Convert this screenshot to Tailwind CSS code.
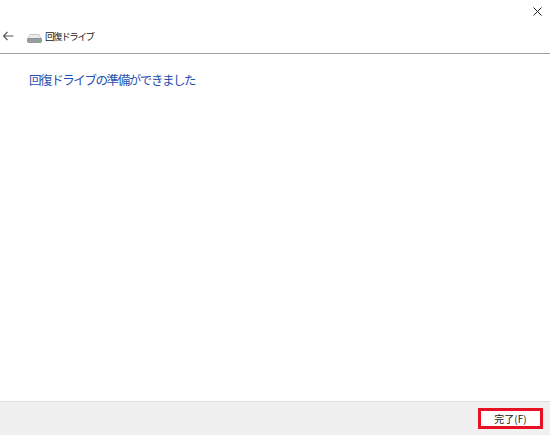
<!DOCTYPE html>
<html lang="ja">
<head>
    <meta charset="UTF-8">
    <title>回復ドライブ</title>
    <script src="https://cdn.jsdelivr.net/npm/@tailwindcss/browser@4"></script>
</head>
<body class="w-[550px] h-[435px] overflow-hidden bg-white font-['Noto_Sans_CJK_JP',sans-serif]">
    <div class="flex flex-col h-full">
        <!-- close button row -->
        <div class="flex justify-end h-[20px] pt-[7px] pr-[8px]">
            <svg width="9" height="9" viewBox="0 0 9 9" class="block">
                <path d="M0.5 0.5L8.5 8.5M8.5 0.5L0.5 8.5" stroke="#222" stroke-width="1" fill="none"/>
            </svg>
        </div>

        <!-- header -->
        <div class="flex items-center h-[34px] border-b border-[#a0a0a0] pb-[1px]">
            <svg width="12" height="10" viewBox="0 0 12 10" class="ml-[2px]">
                <path d="M11.5 5H1.5M5.5 1L1.5 5L5.5 9" stroke="#555" stroke-width="1.1" fill="none"/>
            </svg>
            <svg width="15" height="9" viewBox="0 0 15 9" class="ml-[13px] mt-[4px]">
                <path d="M3 0.5H12L14.5 5H0.5Z" fill="#ececec" stroke="#b5b5b5" stroke-width="0.7"/>
                <rect x="0.5" y="4.5" width="14" height="4" rx="1" fill="#9a9ea3" stroke="#70757a" stroke-width="0.6"/>
                <rect x="11" y="6" width="2" height="1.5" fill="#5fc05f"/>
            </svg>
            <span class="ml-[3px] text-[9.5px] tracking-[-1.4px] text-[#222]">回復ドライブ</span>
        </div>

        <!-- main -->
        <div class="flex-1 pl-[29px] pt-[17px]">
            <h1 class="text-[12.5px] tracking-[-1.42px] leading-[18px] font-normal text-[#1f4fb0]">回復ドライブの準備ができました</h1>
        </div>

        <!-- footer -->
        <div class="flex justify-end items-center h-[34px] bg-[#f0f0f0] border-t border-[#dfdfdf] pr-[7px]">
            <button class="w-[65px] h-[21px] bg-white border-[3px] border-[#e81123] text-[10px] text-[#222] flex items-center justify-center">完了(F)</button>
        </div>
    </div>
</body>
</html>
